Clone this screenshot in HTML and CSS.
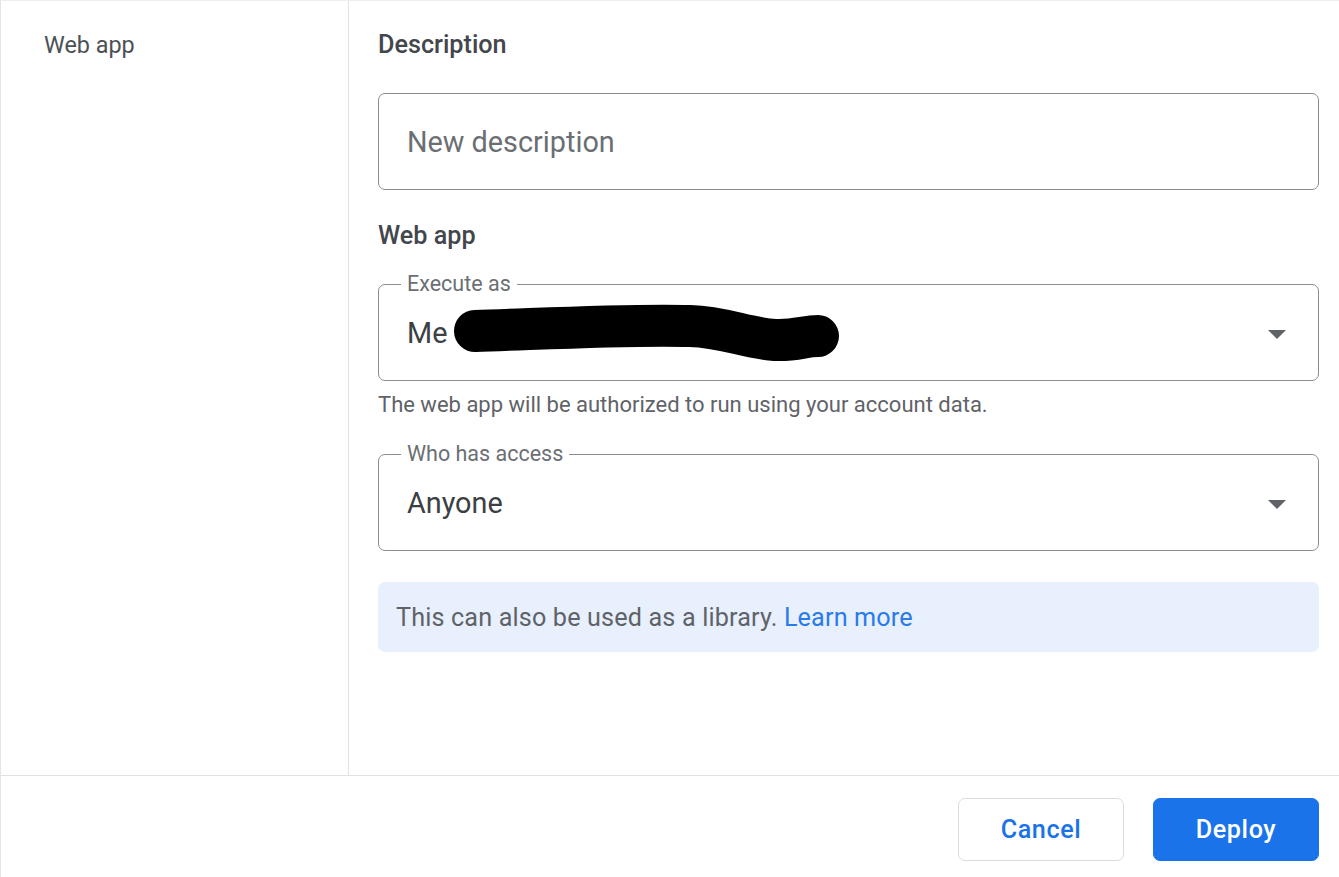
FILE: index.html
```html
<!DOCTYPE html>
<html lang="en">
<head>
<meta charset="utf-8">
<title>New deployment</title>
<link rel="stylesheet" href="styles.css">
</head>
<body>
<div class="dialog">
  <div class="dialog-body">
    <nav class="sidebar">
      <div class="nav-item">Web app</div>
    </nav>
    <main class="content">
      <h2 class="section-title">Description</h2>
      <div class="text-input">
        <span class="placeholder">New description</span>
      </div>

      <h2 class="section-title section-gap">Web app</h2>
      <div class="select-field">
        <span class="field-label">Execute as</span>
        <span class="field-value">Me</span>
        <svg class="redaction" width="392" height="60" viewBox="0 0 392 60" aria-hidden="true">
          <path d="M25 28 C 90 26, 180 21, 240 23 C 275 24, 295 35, 325 37 C 345 38, 355 33, 368 33" fill="none" stroke="#000" stroke-width="42" stroke-linecap="round"/>
        </svg>
        <span class="spacer"></span>
        <svg class="caret" width="18" height="9" viewBox="0 0 18 9" aria-hidden="true"><path d="M0 0H18L9 9Z" fill="#5f6368"/></svg>
      </div>
      <p class="helper">The web app will be authorized to run using your account data.</p>

      <div class="select-field access">
        <span class="field-label">Who has access</span>
        <span class="field-value">Anyone</span>
        <span class="spacer"></span>
        <svg class="caret" width="18" height="9" viewBox="0 0 18 9" aria-hidden="true"><path d="M0 0H18L9 9Z" fill="#5f6368"/></svg>
      </div>

      <div class="info-box">This can also be used as a library. <a class="link" href="#">Learn more</a></div>
    </main>
  </div>
  <footer class="dialog-footer">
    <button class="btn btn-outline" type="button">Cancel</button>
    <button class="btn btn-primary" type="button">Deploy</button>
  </footer>
</div>
</body>
</html>
```

FILE: styles.css
```css
* { box-sizing: border-box; }

html, body {
  margin: 0;
  padding: 0;
  background: #ffffff;
}

body {
  font-family: Roboto, "Liberation Sans", Arial, sans-serif;
  color: #3c4043;
}

.dialog {
  width: 1339px;
  height: 877px;
  display: flex;
  flex-direction: column;
  border-left: 1px solid #e3e4e6;
  border-top: 1px solid #eceef0;
}

.dialog-body {
  flex: 1;
  display: flex;
  min-height: 0;
}

.sidebar {
  width: 348px;
  flex: none;
  border-right: 1px solid #e0e2e5;
  padding: 29px 0 0 43px;
}

.nav-item {
  font-size: 23.4px;
  line-height: 30px;
  color: #4d5055;
}

.content {
  flex: 1;
  padding: 29px 20px 0 29px;
  display: flex;
  flex-direction: column;
}

.section-title {
  margin: 0;
  font-size: 25.2px;
  font-weight: 500;
  line-height: 30px;
  color: #43474c;
}

.section-gap {
  margin-top: 31px;
}

.text-input {
  margin-top: 33px;
  height: 97px;
  border: 1px solid #898d92;
  border-radius: 7px;
  display: flex;
  align-items: center;
  padding: 0 28px;
}

.placeholder {
  font-size: 28.8px;
  color: #6b6f74;
}

.select-field {
  position: relative;
  margin-top: 33px;
  height: 97px;
  border: 1px solid #898d92;
  border-radius: 7px;
  display: flex;
  align-items: center;
  padding: 0 32px 0 28px;
}

.select-field.access {
  margin-top: 37px;
}

.field-label {
  position: absolute;
  top: -13px;
  left: 22px;
  padding: 0 6px;
  background: #ffffff;
  font-size: 21.5px;
  line-height: 24px;
  color: #6b6f74;
}

.field-value {
  font-size: 28.8px;
  color: #3c4043;
}

.redaction {
  margin-left: 3px;
  flex: none;
}

.spacer {
  flex: 1;
}

.caret {
  flex: none;
  margin-top: 3px;
}

.helper {
  margin: 12px 0 0 0;
  font-size: 22px;
  line-height: 24px;
  color: #5f6368;
}

.info-box {
  margin-top: 31px;
  height: 70px;
  border-radius: 7px;
  background: #e8f0fe;
  display: flex;
  align-items: center;
  padding: 0 18px;
  font-size: 25.2px;
  letter-spacing: 0.15px;
  color: #5f6368;
  white-space: pre;
}

.link {
  color: #2a7bea;
  text-decoration: none;
}

.dialog-footer {
  height: 102px;
  flex: none;
  border-top: 1px solid #e0e2e5;
  display: flex;
  justify-content: flex-end;
  align-items: flex-start;
  gap: 29px;
  padding: 22px 20px 0 0;
}

.btn {
  width: 166px;
  height: 63px;
  border-radius: 7px;
  font-family: Roboto, "Liberation Sans", Arial, sans-serif;
  font-size: 25.2px;
  font-weight: 500;
  letter-spacing: 0.6px;
  cursor: pointer;
}

.btn-outline {
  background: #ffffff;
  border: 1px solid #dadce0;
  color: #1a73e8;
}

.btn-primary {
  background: #1a73e8;
  border: 1px solid #1a73e8;
  color: #ffffff;
}
```
